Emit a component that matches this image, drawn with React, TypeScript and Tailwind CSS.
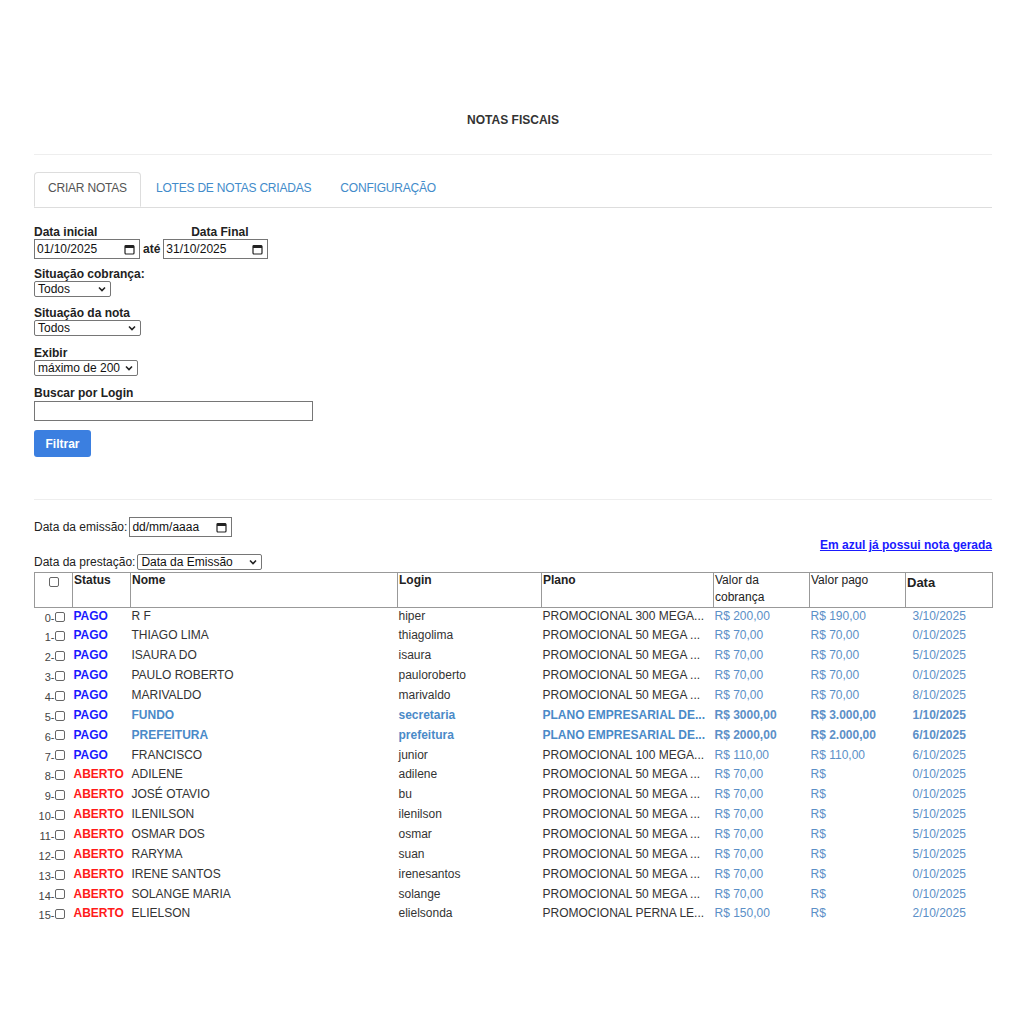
import React from 'react';

type Row = {
  nome: string;
  login: string;
  plano: string;
  valor: string;
  pago: string;
  data: string;
  status: 'PAGO' | 'ABERTO';
  azul?: boolean;
};

const rows: Row[] = [
  { status: 'PAGO', nome: 'R F', login: 'hiper', plano: 'PROMOCIONAL 300 MEGA...', valor: 'R$ 200,00', pago: 'R$ 190,00', data: '3/10/2025' },
  { status: 'PAGO', nome: 'THIAGO LIMA', login: 'thiagolima', plano: 'PROMOCIONAL 50 MEGA ...', valor: 'R$ 70,00', pago: 'R$ 70,00', data: '0/10/2025' },
  { status: 'PAGO', nome: 'ISAURA DO', login: 'isaura', plano: 'PROMOCIONAL 50 MEGA ...', valor: 'R$ 70,00', pago: 'R$ 70,00', data: '5/10/2025' },
  { status: 'PAGO', nome: 'PAULO ROBERTO', login: 'pauloroberto', plano: 'PROMOCIONAL 50 MEGA ...', valor: 'R$ 70,00', pago: 'R$ 70,00', data: '0/10/2025' },
  { status: 'PAGO', nome: 'MARIVALDO', login: 'marivaldo', plano: 'PROMOCIONAL 50 MEGA ...', valor: 'R$ 70,00', pago: 'R$ 70,00', data: '8/10/2025' },
  { status: 'PAGO', nome: 'FUNDO', login: 'secretaria', plano: 'PLANO EMPRESARIAL DE...', valor: 'R$ 3000,00', pago: 'R$ 3.000,00', data: '1/10/2025', azul: true },
  { status: 'PAGO', nome: 'PREFEITURA', login: 'prefeitura', plano: 'PLANO EMPRESARIAL DE...', valor: 'R$ 2000,00', pago: 'R$ 2.000,00', data: '6/10/2025', azul: true },
  { status: 'PAGO', nome: 'FRANCISCO', login: 'junior', plano: 'PROMOCIONAL 100 MEGA...', valor: 'R$ 110,00', pago: 'R$ 110,00', data: '6/10/2025' },
  { status: 'ABERTO', nome: 'ADILENE', login: 'adilene', plano: 'PROMOCIONAL 50 MEGA ...', valor: 'R$ 70,00', pago: 'R$', data: '0/10/2025' },
  { status: 'ABERTO', nome: 'JOSÉ OTAVIO', login: 'bu', plano: 'PROMOCIONAL 50 MEGA ...', valor: 'R$ 70,00', pago: 'R$', data: '0/10/2025' },
  { status: 'ABERTO', nome: 'ILENILSON', login: 'ilenilson', plano: 'PROMOCIONAL 50 MEGA ...', valor: 'R$ 70,00', pago: 'R$', data: '5/10/2025' },
  { status: 'ABERTO', nome: 'OSMAR DOS', login: 'osmar', plano: 'PROMOCIONAL 50 MEGA ...', valor: 'R$ 70,00', pago: 'R$', data: '5/10/2025' },
  { status: 'ABERTO', nome: 'RARYMA', login: 'suan', plano: 'PROMOCIONAL 50 MEGA ...', valor: 'R$ 70,00', pago: 'R$', data: '5/10/2025' },
  { status: 'ABERTO', nome: 'IRENE SANTOS', login: 'irenesantos', plano: 'PROMOCIONAL 50 MEGA ...', valor: 'R$ 70,00', pago: 'R$', data: '0/10/2025' },
  { status: 'ABERTO', nome: 'SOLANGE MARIA', login: 'solange', plano: 'PROMOCIONAL 50 MEGA ...', valor: 'R$ 70,00', pago: 'R$', data: '0/10/2025' },
  { status: 'ABERTO', nome: 'ELIELSON', login: 'elielsonda', plano: 'PROMOCIONAL PERNA LE...', valor: 'R$ 150,00', pago: 'R$', data: '2/10/2025' },
];

function Chevron() {
  return (
    <svg width="10" height="10" viewBox="0 0 10 10" className="shrink-0">
      <path d="M2 3.5 L5 6.5 L8 3.5" fill="none" stroke="#222" strokeWidth="1.6" />
    </svg>
  );
}

function CalIcon() {
  return (
    <svg width="11" height="11" viewBox="0 0 11 11" className="shrink-0">
      <rect x="1" y="1.5" width="9" height="8.5" rx="1" fill="none" stroke="#222" strokeWidth="1.2" />
      <rect x="1" y="1.5" width="9" height="2.5" fill="#222" />
    </svg>
  );
}

function FakeDate({ value, w }: { value: string; w: string }) {
  return (
    <div className={`flex items-center justify-between border border-[#767676] bg-white h-[20px] pl-[2px] pr-[4px] text-[12px] text-[#111] ${w}`}>
      <span>{value}</span>
      <CalIcon />
    </div>
  );
}

function FakeSelect({ value, w }: { value: string; w: string }) {
  return (
    <div className={`flex items-center justify-between border border-[#767676] bg-white h-[16px] pl-[3px] pr-[3px] text-[12px] leading-none text-[#111] rounded-[2px] ${w}`}>
      <span>{value}</span>
      <Chevron />
    </div>
  );
}

function Box() {
  return <span className="inline-block w-[10px] h-[10px] border border-[#666] rounded-[2px] bg-white align-middle" />;
}

export default function App() {
  return (
    <div className="min-h-[1024px] bg-white pl-[34px] pr-[32px] pt-[111px] text-[#333]" style={{ fontFamily: '"Liberation Sans", Arial, sans-serif' }}>
      <div className="text-center text-[12px] font-bold text-[#333]">NOTAS FISCAIS</div>
      <div className="mt-[25px] border-t border-[#eee]" />

      <div className="mt-[17px] flex border-b border-[#ddd] text-[12px] tracking-[-0.2px]">
        <div className="-mb-px border border-[#ddd] border-b-white rounded-t-[4px] bg-white px-[13px] pb-[3px] h-[35px] flex items-center text-[#555]">CRIAR NOTAS</div>
        <div className="px-[15px] pb-[3px] h-[35px] flex items-center text-[#428bca]">LOTES DE NOTAS CRIADAS</div>
        <div className="px-[14px] pb-[3px] h-[35px] flex items-center text-[#428bca]">CONFIGURAÇÃO</div>
      </div>

      <div className="mt-[17px] text-[12px] text-[#222]">
        <div className="flex items-end gap-[3px]">
          <div className="flex flex-col">
            <span className="font-bold leading-[14px]">Data inicial</span>
            <FakeDate value="01/10/2025" w="w-[106px]" />
          </div>
          <span className="font-bold leading-[20px]">até</span>
          <div className="flex flex-col items-center">
            <span className="font-bold leading-[14px] ml-[8px]">Data Final</span>
            <FakeDate value="31/10/2025" w="w-[105px]" />
          </div>
        </div>

        <div className="mt-[9px] font-bold leading-[13px]">Situação cobrança:</div>
        <FakeSelect value="Todos" w="w-[77px]" />

        <div className="mt-[10px] font-bold leading-[13px]">Situação da nota</div>
        <FakeSelect value="Todos" w="w-[107px]" />

        <div className="mt-[11px] font-bold leading-[13px]">Exibir</div>
        <FakeSelect value="máximo de 200" w="w-[104px]" />

        <div className="mt-[11px] font-bold leading-[13px]">Buscar por Login</div>
        <div className="mt-[1px] w-[279px] h-[20px] border border-[#767676] bg-white" />

        <button className="mt-[9px] h-[27px] w-[57px] rounded-[3px] bg-[#3b7fe0] text-white font-bold text-[12px]">Filtrar</button>
      </div>

      <div className="mt-[42px] border-t border-[#eee]" />

      <div className="mt-[17px] flex items-center text-[12px] text-[#222]">
        <span>Data da emissão:</span>
        <FakeDate value="dd/mm/aaaa" w="w-[103px] ml-[2px]" />
      </div>

      <div className="mt-[1px] flex justify-end">
        <a href="#" className="text-[12px] leading-[14px] font-bold text-[#1a1aff] underline">Em azul já possui nota gerada</a>
      </div>

      <div className="mt-[2px] flex items-center text-[12px] leading-[16px] text-[#222]">
        <span>Data da prestação:</span>
        <FakeSelect value="Data da Emissão" w="w-[125px] ml-[2px]" />
      </div>

      <table className="mt-[2px] table-fixed border-collapse w-[958px] text-[12px]">
        <colgroup>
          <col className="w-[38px]" />
          <col className="w-[58px]" />
          <col className="w-[267px]" />
          <col className="w-[144px]" />
          <col className="w-[172px]" />
          <col className="w-[96px]" />
          <col className="w-[96px]" />
          <col className="w-[87px]" />
        </colgroup>
        <thead>
          <tr className="h-[34px] align-top text-left text-[#222]">
            <th className="border border-[#999] text-center pt-[2px] leading-none"><Box /></th>
            <th className="border border-[#999] px-[1px] font-bold leading-[14px]">Status</th>
            <th className="border border-[#999] px-[1px] font-bold leading-[14px]">Nome</th>
            <th className="border border-[#999] px-[1px] font-bold leading-[14px]">Login</th>
            <th className="border border-[#999] px-[1px] font-bold leading-[14px]">Plano</th>
            <th className="border border-[#999] px-[1px] font-normal leading-[17px] -translate-y-[1px]">Valor da<br />cobrança</th>
            <th className="border border-[#999] px-[1px] font-normal leading-[14px]">Valor pago</th>
            <th className="border border-[#999] px-[1px] pt-[2px] font-bold text-[13px] leading-[16px]">Data</th>
          </tr>
        </thead>
        <tbody>
          {rows.map((r, i) => (
            <tr key={i} className="h-[19.87px] align-top leading-[16px]">
              <td className="text-right pr-[8px] text-[#444] whitespace-nowrap">
                <span className="text-[11px] relative top-[2px]">{i}-</span><Box />
              </td>
              <td className={`px-[1px] font-bold ${r.status === 'PAGO' ? 'text-[#1a1aff]' : 'text-[#ff1a1a]'}`}>{r.status}</td>
              <td className={`px-[1px] ${r.azul ? 'text-[#4a8ac8] font-bold' : 'text-[#333]'}`}>{r.nome}</td>
              <td className={`px-[1px] ${r.azul ? 'text-[#4a8ac8] font-bold' : 'text-[#333]'}`}>{r.login}</td>
              <td className={`px-[1px] whitespace-nowrap ${r.azul ? 'text-[#4a8ac8] font-bold' : 'text-[#333]'}`}>{r.plano}</td>
              <td className={`px-[1px] text-[#5b8fc7] ${r.azul ? 'font-bold' : ''}`}>{r.valor}</td>
              <td className={`px-[1px] text-[#5b8fc7] ${r.azul ? 'font-bold' : ''}`}>{r.pago}</td>
              <td className={`pl-[7px] text-[#5b8fc7] ${r.azul ? 'font-bold' : ''}`}>{r.data}</td>
            </tr>
          ))}
        </tbody>
      </table>
    </div>
  );
}
